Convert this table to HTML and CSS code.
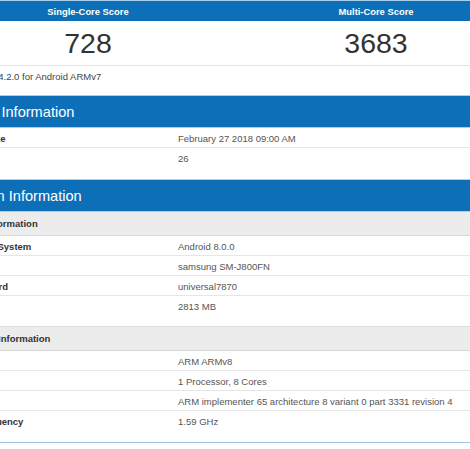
FILE: index.html
```html
<!DOCTYPE html>
<html>
<head>
<meta charset="utf-8">
<link rel="stylesheet" href="styles.css">
</head>
<body>
<div class="page">
  <div class="scores">
    <div class="score-head">
      <div class="score-col">Single-Core Score</div>
      <div class="score-col">Multi-Core Score</div>
    </div>
    <div class="score-vals">
      <div class="score-col">728</div>
      <div class="score-col">3683</div>
    </div>
    <div class="version">Geekbench 4.2.0 for Android ARMv7</div>
  </div>

  <div class="section">
    <div class="section-head">Result Information</div>
    <div class="row"><div class="label">Upload Date</div><div class="value">February 27 2018 09:00 AM</div></div>
    <div class="row last"><div class="label">Views</div><div class="value">26</div></div>
  </div>

  <div class="section">
    <div class="section-head">System Information</div>
    <div class="subhead">System Information</div>
    <div class="row"><div class="label">Operating System</div><div class="value">Android 8.0.0</div></div>
    <div class="row"><div class="label">Model</div><div class="value">samsung SM-J800FN</div></div>
    <div class="row"><div class="label">Motherboard</div><div class="value">universal7870</div></div>
    <div class="row last"><div class="label">Memory</div><div class="value">2813 MB</div></div>
    <div class="subhead second">Processor Information</div>
    <div class="row"><div class="label">Name</div><div class="value">ARM ARMv8</div></div>
    <div class="row"><div class="label">Topology</div><div class="value">1 Processor, 8 Cores</div></div>
    <div class="row"><div class="label">Identifier</div><div class="value">ARM implementer 65 architecture 8 variant 0 part 3331 revision 4</div></div>
    <div class="row last"><div class="label">Base Frequency</div><div class="value">1.59 GHz</div></div>
  </div>

  <div class="next-line"></div>
</div>
</body>
</html>
```

FILE: styles.css
```css
html, body {
  margin: 0;
  padding: 0;
  background: #ffffff;
}
body {
  width: 470px;
  height: 449px;
  overflow: hidden;
  font-family: "Liberation Sans", Arial, sans-serif;
}
.page {
  width: 576px;
  margin-left: -56px;
}
.scores {
  border-top: 1px solid #a9d0ee;
}
.score-head {
  display: flex;
  background: #0d6fb8;
  height: 20px;
  align-items: center;
  color: #ffffff;
  font-weight: bold;
  font-size: 9.4px;
}
.score-col {
  flex: 1;
  text-align: center;
}
.score-vals {
  display: flex;
  height: 43px;
  align-items: center;
  border-bottom: 1px solid #e3e3e3;
  font-size: 28.5px;
  color: #333333;
  padding-top: 1px;
}
.version {
  height: 20px;
  line-height: 21px;
  padding-left: 3px;
  font-size: 9.5px;
  color: #444444;
  margin-bottom: 9px;
}
.section {
  margin-bottom: 11px;
}
.section-head {
  border-top: 1px solid #a9d0ee;
  background: #0d6fb8;
  color: #ffffff;
  height: 31px;
  line-height: 32px;
  padding-left: 12px;
  font-size: 14.6px;
  border-bottom: 1px solid #a9d0ee;
}
.subhead {
  background: #ececec;
  height: 23px;
  line-height: 23px;
  padding-left: 5px;
  font-size: 9.5px;
  font-weight: bold;
  color: #333333;
  border-bottom: 1px solid #d8d8d8;
}
.subhead.second {
  margin-top: 10px;
  border-top: 1px solid #dddddd;
}
.row {
  display: grid;
  grid-template-columns: 234px 1fr;
  height: 18px;
  padding-top: 1px;
  line-height: 19px;
  border-bottom: 1px solid #e6e6e6;
  font-size: 9.5px;
}
.row.last {
  border-bottom: 1px solid transparent;
}
.label {
  padding-left: 6px;
  font-weight: bold;
  color: #333333;
}
.value {
  color: #555555;
  white-space: nowrap;
}
.next-line {
  border-top: 1px solid #9fc6e4;
}
```
